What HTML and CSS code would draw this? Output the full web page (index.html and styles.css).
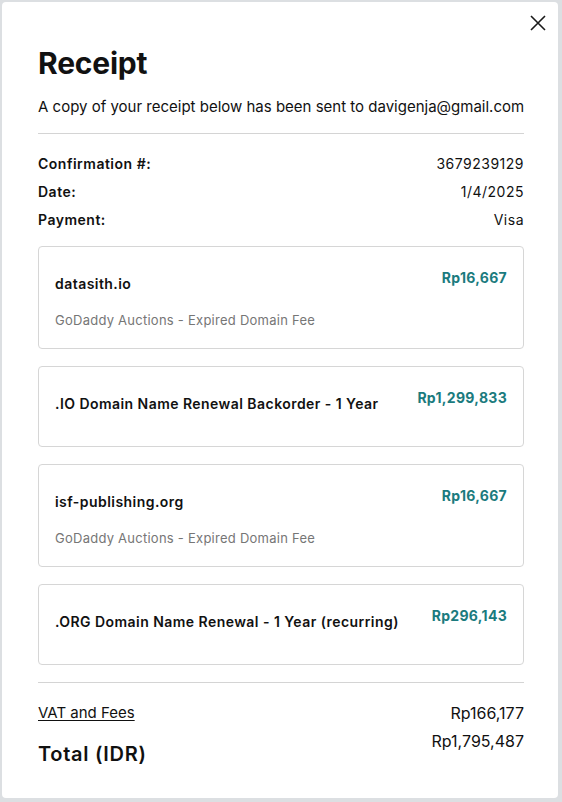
FILE: index.html
```html
<!DOCTYPE html>
<html lang="en">
<head>
    <meta charset="UTF-8">
    <meta name="viewport" content="width=device-width, initial-scale=1.0">
    <title>Receipt</title>
    <link rel="stylesheet" href="styles.css">
</head>
<body>
    <div class="modal">
        <button class="close-btn" aria-label="Close">
            <svg width="16" height="16" viewBox="0 0 16 16">
                <path d="M1 1 L15 15 M15 1 L1 15" stroke="#1a1a1a" stroke-width="1.6" fill="none"/>
            </svg>
        </button>

        <h1 class="title">Receipt</h1>
        <p class="subtitle">A copy of your receipt below has been sent to davigenja@gmail.com</p>
        <hr class="divider">

        <div class="details">
            <div class="detail-row"><span class="label">Confirmation #:</span><span>3679239129</span></div>
            <div class="detail-row"><span class="label">Date:</span><span>1/4/2025</span></div>
            <div class="detail-row"><span class="label">Payment:</span><span>Visa</span></div>
        </div>

        <div class="items">
            <div class="item">
                <div class="item-top">
                    <div class="item-name">datasith.io</div>
                    <div class="item-price">Rp16,667</div>
                </div>
                <div class="item-desc">GoDaddy Auctions - Expired Domain Fee</div>
            </div>
            <div class="item">
                <div class="item-top">
                    <div class="item-name">.IO Domain Name Renewal Backorder - 1 Year</div>
                    <div class="item-price">Rp1,299,833</div>
                </div>
            </div>
            <div class="item">
                <div class="item-top">
                    <div class="item-name">isf-publishing.org</div>
                    <div class="item-price">Rp16,667</div>
                </div>
                <div class="item-desc">GoDaddy Auctions - Expired Domain Fee</div>
            </div>
            <div class="item">
                <div class="item-top">
                    <div class="item-name">.ORG Domain Name Renewal - 1 Year (recurring)</div>
                    <div class="item-price">Rp296,143</div>
                </div>
            </div>
        </div>

        <hr class="divider">

        <div class="summary">
            <div class="summary-row"><a href="#" class="fees-link">VAT and Fees</a><span class="amount">Rp166,177</span></div>
            <div class="summary-row total"><span class="total-label">Total (IDR)</span><span class="amount">Rp1,795,487</span></div>
        </div>
    </div>
</body>
</html>
```

FILE: styles.css
```css
body {
    margin: 0;
    background-color: #dcdfe2;
    font-family: 'Inter', 'Noto Sans', sans-serif;
    color: #111;
}

.modal {
    position: relative;
    box-sizing: border-box;
    width: 556px;
    height: 796px;
    margin: 2px 4px 4px 2px;
    padding: 43px 34px 0 36px;
    background-color: #fff;
    border-radius: 4px;
}

.close-btn {
    position: absolute;
    top: 13px;
    right: 12px;
    width: 16px;
    height: 16px;
    padding: 0;
    border: none;
    background: none;
    cursor: pointer;
}

.close-btn svg {
    display: block;
}

.title {
    margin: 0;
    font-size: 30px;
    line-height: 36px;
    font-weight: 700;
    letter-spacing: -0.2px;
}

.subtitle {
    margin: 16px 0 0;
    font-size: 15px;
    line-height: 20px;
    white-space: nowrap;
}

.divider {
    margin: 16px 0 0;
    border: none;
    border-top: 1px solid #d4d4d4;
}

.details {
    display: flex;
    flex-direction: column;
    gap: 8px;
    margin-top: 20px;
}

.detail-row,
.summary-row {
    display: flex;
    justify-content: space-between;
    align-items: flex-start;
    font-size: 14px;
    line-height: 20px;
    letter-spacing: 0.5px;
}

.label {
    font-weight: 600;
}

.items {
    display: flex;
    flex-direction: column;
    gap: 17px;
    margin: 16px 0 17px;
}

.item {
    border: 1px solid #d6d6d6;
    border-radius: 4px;
    padding: 21px 16px 18px;
}

.item-top {
    display: flex;
    justify-content: space-between;
    align-items: flex-start;
    gap: 16px;
}

.item-name {
    margin-top: 6px;
    padding-bottom: 14px;
    font-size: 14px;
    line-height: 20px;
    font-weight: 600;
    letter-spacing: 0.45px;
}

.item-price {
    font-size: 14px;
    line-height: 20px;
    font-weight: 700;
    letter-spacing: 0.3px;
    color: #1b7b7e;
    white-space: nowrap;
}

.item-desc {
    margin-top: 2px;
    font-size: 13px;
    line-height: 20px;
    letter-spacing: 0.25px;
    color: #767676;
}

.summary {
    display: flex;
    flex-direction: column;
    gap: 8px;
    margin-top: 20px;
}

.fees-link {
    color: #111;
    font-size: 15px;
    letter-spacing: 0;
    text-decoration: underline;
    text-underline-offset: 2px;
}

.amount {
    font-size: 16px;
    letter-spacing: 0;
}

.total-label {
    margin-top: 9px;
    font-size: 20px;
    line-height: 28px;
    font-weight: 600;
    letter-spacing: 0.7px;
}
```
